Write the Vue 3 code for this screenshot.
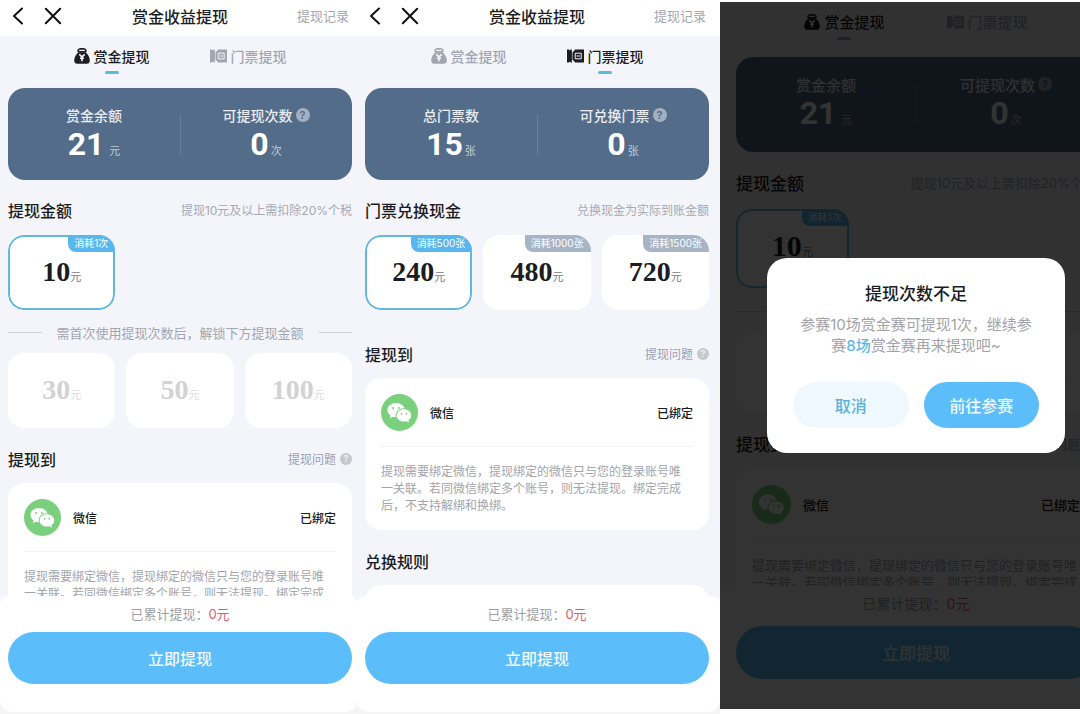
<script setup>
const notice = '提现需要绑定微信，提现绑定的微信只与您的登录账号唯一关联。若同微信绑定多个账号，则无法提现。绑定完成后，不支持解绑和换绑。'

const cashStats = [
  { label: '赏金余额', value: '21', unit: '元', help: false, spaced: true },
  { label: '可提现次数', value: '0', unit: '次', help: true, spaced: false },
]

const cashOptions = [{ value: '10', cost: '消耗1次', selected: true }]
const lockedOptions = [{ value: '30' }, { value: '50' }, { value: '100' }]

const screens = [
  {
    id: 'cash',
    header: true,
    active: 'cash',
    stats: cashStats,
    heading: '提现金额',
    hint: '提现10元及以上需扣除20%个税',
    options: cashOptions,
    locked: lockedOptions,
  },
  {
    id: 'ticket',
    header: true,
    active: 'ticket',
    stats: [
      { label: '总门票数', value: '15', unit: '张', help: false },
      { label: '可兑换门票', value: '0', unit: '张', help: true },
    ],
    heading: '门票兑换现金',
    hint: '兑换现金为实际到账金额',
    options: [
      { value: '240', cost: '消耗500张', selected: true },
      { value: '480', cost: '消耗1000张' },
      { value: '720', cost: '消耗1500张' },
    ],
    rules: true,
  },
  {
    id: 'dialog',
    active: 'cash',
    stats: cashStats,
    heading: '提现金额',
    hint: '提现10元及以上需扣除20%个税',
    options: cashOptions,
    locked: lockedOptions,
    dialog: true,
  },
]
</script>

<template>
  <main class="board">
    <section v-for="s in screens" :key="s.id" class="screen" :class="`screen--${s.id}`">
      <div class="page">
        <header v-if="s.header" class="header">
          <div class="nav">
            <button type="button" class="icon-btn" aria-label="返回">
              <svg width="12" height="18" viewBox="0 0 12 18"><path d="M10 1.5 2 9l8 7.5" fill="none" stroke="#111" stroke-width="2" stroke-linecap="round" stroke-linejoin="round" /></svg>
            </button>
            <button type="button" class="icon-btn" aria-label="关闭">
              <svg width="18" height="18" viewBox="0 0 18 18"><path d="M1.8 1.8l14.4 14.4M16.2 1.8 1.8 16.2" fill="none" stroke="#111" stroke-width="2" stroke-linecap="round" /></svg>
            </button>
          </div>
          <h1 class="title">赏金收益提现</h1>
          <a href="#" class="record">提现记录</a>
        </header>

        <div class="body">
          <div class="tabs" role="tablist">
            <button type="button" role="tab" class="tab" :class="{ 'tab--on': s.active === 'cash' }" :aria-selected="s.active === 'cash'">
              <svg width="16" height="16" viewBox="0 0 16 16">
                <path d="M4 4.600C2.900 3 3 .9 4.900.4 6.900 0 9.100 0 11.100.4c1.900.5 2 2.600.9 4.200z" fill="currentColor" />
                <path d="M5.600 2.300h4.800" stroke="#f4f5fa" stroke-width="1.200" stroke-linecap="round" />
                <path d="M4.300 4.200h7.400c2.300 2.200 4.100 5.300 4.100 8.300 0 2-1.200 3.300-3 3.300H3.200c-1.800 0-3-1.300-3-3.300 0-3 1.800-6.100 4.100-8.300z" fill="currentColor" />
                <path d="M5.300 6.300 8 8.800l2.700-2.500M8 8.500v4.700M6 10.300h4" fill="none" stroke="#f4f5fa" stroke-width="1.600" />
              </svg>
              <span>赏金提现</span>
            </button>
            <button type="button" role="tab" class="tab" :class="{ 'tab--on': s.active === 'ticket' }" :aria-selected="s.active === 'ticket'">
              <svg width="17" height="16" viewBox="0 0 17 16">
                <path d="M0 1.500h2l.9.900.9-.900H5v13H3.800l-.9-.900-.9.900H0z" fill="currentColor" />
                <path d="M5.300 4.500 7 3l1-1.500h9v13H8L7 13l-1.700-1.500z" fill="currentColor" />
                <path d="M5.200 2v12" stroke="#f4f5fa" stroke-width=".6" stroke-dasharray="1.500 1" />
                <path d="M8.200 5.200h6v5.600h-6z" fill="none" stroke="#f4f5fa" stroke-width="1" />
                <path d="M9.500 8h3.500" stroke="#f4f5fa" stroke-width="1" />
              </svg>
              <span>门票提现</span>
            </button>
          </div>

          <dl class="stats">
            <div v-for="st in s.stats" :key="st.label" class="stat">
              <dt class="stat-label">
                <span>{{ st.label }}</span>
                <button v-if="st.help" type="button" class="help help--stat" aria-label="说明">?</button>
              </dt>
              <dd class="stat-value" :class="{ 'stat-value--spaced': st.spaced }">
                <strong>{{ st.value }}</strong><small>{{ st.unit }}</small>
              </dd>
            </div>
          </dl>

          <div class="section-head">
            <h2>{{ s.heading }}</h2>
            <span class="hint">{{ s.hint }}</span>
          </div>
          <div class="options">
            <button v-for="o in s.options" :key="o.value" type="button" class="option" :class="{ 'option--on': o.selected }">
              <span class="amount">{{ o.value }}</span><span class="unit">元</span>
              <span class="cost">{{ o.cost }}</span>
            </button>
          </div>

          <template v-if="s.locked">
            <p class="unlock"><span>需首次使用提现次数后，解锁下方提现金额</span></p>
            <div class="options">
              <button v-for="o in s.locked" :key="o.value" type="button" class="option option--locked" disabled>
                <span class="amount">{{ o.value }}</span><span class="unit">元</span>
              </button>
            </div>
          </template>

          <div class="section-head section-head--account">
            <h2>提现到</h2>
            <a href="#" class="question">提现问题<span class="help">?</span></a>
          </div>
          <article class="account">
            <div class="account-row">
              <svg class="wechat" viewBox="0 0 36 36">
                <circle cx="18" cy="18" r="18" fill="#7bd07d" />
                <path d="M14.700 8.800c-4.700 0-8.400 3-8.400 6.800 0 2.200 1.200 4.100 3.200 5.400l-.8 2.700 3-1.600c.9.300 1.900.400 3 .400 4.600 0 8.300-3.100 8.300-6.900s-3.700-6.800-8.300-6.800z" fill="#fff" />
                <ellipse cx="22.300" cy="20.700" rx="8" ry="6.900" fill="#7bd07d" />
                <path d="M22.300 14.900c-4 0-7.100 2.600-7.100 5.900s3.100 5.900 7.100 5.900c.8 0 1.600-.1 2.400-.3l2.600 1.500-.7-2.400c1.700-1.100 2.800-2.800 2.800-4.700 0-3.300-3.200-5.900-7.100-5.900z" fill="#fff" />
                <g fill="#7bd07d"><circle cx="11.700" cy="13.700" r="1" /><circle cx="17.400" cy="13.700" r="1" /><circle cx="20" cy="19.300" r=".9" /><circle cx="24.700" cy="19.300" r=".9" /></g>
              </svg>
              <span>微信</span>
              <span class="bound">已绑定</span>
            </div>
            <p class="notice">{{ notice }}</p>
          </article>

          <template v-if="s.rules">
            <div class="section-head section-head--rules"><h2>兑换规则</h2></div>
            <div class="rules"></div>
          </template>
        </div>

        <footer class="footer">
          <p class="total">已累计提现：<em>0元</em></p>
          <button type="button" class="submit">立即提现</button>
        </footer>

        <div v-if="s.dialog" class="mask">
          <div class="dialog" role="dialog" aria-labelledby="dialog-title">
            <h2 id="dialog-title">提现次数不足</h2>
            <p>参赛10场赏金赛可提现1次，继续参赛<b>8场</b>赏金赛再来提现吧~</p>
            <div class="actions">
              <button type="button" class="cancel">取消</button>
              <button type="button" class="go">前往参赛</button>
            </div>
          </div>
        </div>
      </div>
    </section>
  </main>
</template>

<style>
body {
  background: #fff;
}
</style>

<style scoped>
.board {
  display: grid;
  grid-template-columns: 357fr 363fr 360fr;
  height: 100vh;
  font-family: Inter, "Noto Sans CJK SC", sans-serif;
  color: #1c1d22;
}
h1, h2, p, dl, dd {
  margin: 0;
}
button {
  padding: 0;
  border: 0;
  background: none;
  font: inherit;
  color: inherit;
}
a {
  color: inherit;
  text-decoration: none;
}
.screen {
  --tiny: 10px;
  --small: 12px;
  --total: 13px;
  --text: 14px;
  --head: 16px;
  --number: 28px;
  --row: 17px;
  --tabs: 52px;
  --tab-gap: 60px;
  --card: 92px;
  --section: 55px;
  --option: 75px;
  --unlock: 43px;
  --avatar: 37px;
  --account: 68px;
  --submit: 52px;
  --left: 8px;
  --right: 5px;
  min-width: 0;
  overflow: hidden;
  background: #f5f5f6;
}
.screen--ticket {
  --right: 11px;
}
.screen--dialog {
  --small: 13px;
  --total: 14px;
  --text: 15px;
  --head: 17px;
  --number: 30px;
  --row: 17px;
  --tabs: 55px;
  --tab-gap: 62px;
  --card: 95px;
  --section: 57px;
  --option: 79px;
  --unlock: 45px;
  --avatar: 39px;
  --account: 71px;
  --submit: 53px;
  --left: 16px;
  --right: 16px;
  margin: 2px 0 5px;
}
.page {
  position: relative;
  display: flex;
  flex-direction: column;
  height: calc(100% - 2px);
  overflow: hidden;
  border-radius: 0 0 12px 12px;
  background: #f3f5fa;
}
.screen--dialog .page {
  width: calc(100% + 32px);
  height: 100%;
  border-radius: 0;
}
.header {
  display: grid;
  grid-template-columns: 1fr auto 1fr;
  align-items: center;
  flex: none;
  height: 31px;
  padding: 0 var(--right) 5px var(--left);
  background: #fff;
}
.nav {
  display: flex;
  gap: 20px;
  padding-left: 4px;
}
.icon-btn {
  display: flex;
}
.title {
  font-size: 16px;
  font-weight: 500;
}
.record {
  justify-self: end;
  padding-right: 3px;
  font-size: 13px;
  color: #a5a7ae;
}
.body {
  flex: 1;
  min-height: 0;
  overflow: hidden;
  padding: 0 var(--right) 0 var(--left);
}
.tabs {
  display: flex;
  justify-content: center;
  gap: var(--tab-gap);
  height: var(--tabs);
}
.tab {
  display: flex;
  align-items: center;
  align-self: flex-start;
  gap: 4px;
  position: relative;
  height: 39px;
  font-size: var(--text);
  font-weight: 500;
  color: #a3a5b2;
}
.tab--on {
  color: #1c1d22;
}
.tab--on::after {
  content: "";
  position: absolute;
  left: 50%;
  bottom: 1px;
  width: 14px;
  height: 3px;
  margin-left: -7px;
  border-radius: 2px;
  background: #5fb9dc;
}
.stats {
  display: grid;
  grid-template-columns: 1fr 1fr;
  align-items: start;
  box-sizing: border-box;
  height: var(--card);
  padding-top: 17px;
  border-radius: 17px;
  background: #526c8a;
  color: #fff;
}
.stat {
  position: relative;
}
.stat + .stat::before {
  content: "";
  position: absolute;
  left: 0;
  top: 10px;
  width: 1px;
  height: 40px;
  background: #6b819b;
}
.stat-label {
  display: flex;
  justify-content: center;
  align-items: center;
  gap: 3px;
  height: 20px;
  font-size: var(--text);
  font-weight: 500;
  color: #e9edf2;
}
.help {
  display: inline-flex;
  align-items: center;
  justify-content: center;
  width: 12px;
  height: 12px;
  border-radius: 50%;
  background: #c6c8cd;
  font-size: 9px;
  font-weight: 600;
  line-height: 1;
  color: #f3f4f6;
}
.help--stat {
  width: 14px;
  height: 14px;
  background: #a3b0c1;
  font-size: 11px;
  color: #526c8a;
}
.stat-value {
  display: flex;
  justify-content: center;
  align-items: baseline;
  gap: 2px;
  height: 38px;
  line-height: 38px;
}
.stat-value--spaced {
  gap: 5px;
}
.stat-value strong {
  font-family: Roboto, sans-serif;
  font-size: 32px;
  font-weight: 700;
}
.stat-value small {
  font-size: 11px;
  color: #c3ccd7;
}
.section-head {
  display: flex;
  align-items: center;
  justify-content: space-between;
  height: var(--section);
  padding-top: 4px;
  box-sizing: border-box;
  white-space: nowrap;
}
.section-head h2 {
  font-size: var(--head);
  font-weight: 500;
}
.hint {
  font-size: var(--small);
  color: #a6a8b5;
}
.options {
  display: grid;
  grid-template-columns: repeat(3, 1fr);
  gap: 11px;
}
.option {
  position: relative;
  display: flex;
  align-items: baseline;
  justify-content: center;
  box-sizing: border-box;
  height: var(--option);
  overflow: hidden;
  border-radius: 16px;
  background: #fff;
  line-height: 74px;
}
.option--on::before {
  content: "";
  position: absolute;
  inset: 0;
  border: 2px solid #62b7df;
  border-radius: 16px;
}
.option--locked {
  color: #d2d2d4;
}
.amount {
  font-family: "Liberation Serif", serif;
  font-size: var(--number);
  font-weight: 700;
}
.unit {
  font-size: 11px;
  color: #77787d;
}
.option--locked .unit {
  color: #dcdcde;
}
.cost {
  position: absolute;
  top: 0;
  right: 0;
  padding: 0 7px 0 6px;
  border-radius: 0 0 0 8px;
  background: #a6b4c5;
  font-size: var(--tiny);
  line-height: 17px;
  color: #fff;
}
.option--on .cost {
  background: #58b7ee;
}
.unlock {
  display: flex;
  align-items: center;
  gap: 15px;
  height: var(--unlock);
  padding-top: 1px;
  box-sizing: border-box;
  font-size: 13px;
  white-space: nowrap;
  color: #a3a5b0;
}
.unlock::before,
.unlock::after {
  content: "";
  flex: 1;
  height: 1px;
  background: #cfd2da;
}
.section-head--account {
  padding-top: 6px;
}
.screen--ticket .section-head--account {
  height: 68px;
  padding-top: 19px;
}
.question {
  display: flex;
  align-items: center;
  gap: 4px;
  font-size: var(--small);
  color: #9b9eb3;
}
.account {
  padding: 0 16px 16px;
  border-radius: 16px;
  background: #fff;
}
.account-row {
  display: flex;
  align-items: center;
  gap: 12px;
  height: var(--account);
  border-bottom: 1px solid #f2f2f4;
  font-size: var(--small);
  font-weight: 500;
}
.wechat {
  width: var(--avatar);
  height: var(--avatar);
}
.bound {
  margin-left: auto;
}
.notice {
  padding-top: 16px;
  margin-right: 2px;
  font-size: var(--small);
  line-height: var(--row);
  color: #a3a4aa;
}
.section-head--rules {
  padding-top: 7px;
}
.rules {
  height: 80px;
  border-radius: 16px;
  background: #fff;
}
.footer {
  flex: none;
  padding: 8px var(--right) 28px var(--left);
  border-radius: 8px 8px 0 0;
  background: #fff;
}
.screen--dialog .footer {
  padding-bottom: 30px;
}
.total {
  height: 28px;
  line-height: 20px;
  text-align: center;
  font-size: var(--total);
  color: #9d9fa5;
}
.screen--dialog .total {
  height: 32px;
}
.total em {
  font-style: normal;
  color: #d9606c;
}
.submit {
  display: block;
  width: 100%;
  height: var(--submit);
  border-radius: 27px;
  background: #5bbdf9;
  font-size: var(--head);
  font-weight: 500;
  color: #f1faff;
}
.mask {
  position: absolute;
  inset: 0;
  display: flex;
  align-items: center;
  justify-content: center;
  background: rgba(0, 0, 0, 0.8);
}
.dialog {
  box-sizing: border-box;
  width: 298px;
  padding: 24px 26px 25px;
  border-radius: 20px;
  background: #fff;
  text-align: center;
}
.dialog h2 {
  font-size: 17px;
  line-height: 24px;
  font-weight: 500;
}
.dialog p {
  padding: 0 3px;
  margin-top: 8px;
  font-size: 15px;
  line-height: 21px;
  color: #a2a3a8;
}
.dialog b {
  font-weight: 500;
  color: #5bb9e3;
}
.actions {
  display: grid;
  grid-template-columns: 1fr 1fr;
  gap: 15px;
  margin-top: 26px;
}
.actions button {
  height: 46px;
  border-radius: 23px;
  font-size: 16px;
  font-weight: 500;
}
.cancel {
  background: #eff8ff;
  color: #58b3dc;
}
.actions .go {
  background: #5bbdf9;
  color: #f1faff;
}
</style>
